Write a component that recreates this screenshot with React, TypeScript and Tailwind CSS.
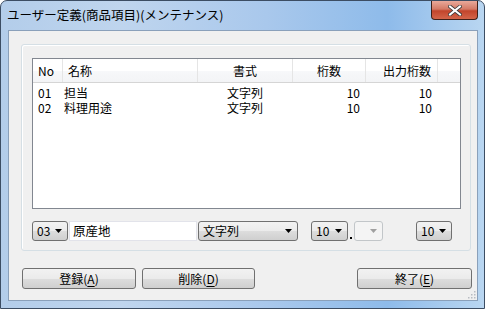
import React from "react";

const font = { fontFamily: '"Noto Sans CJK JP", "Noto Sans", sans-serif' };

function Arrow({ disabled = false }: { disabled?: boolean }) {
  return (
    <svg width="7" height="4" viewBox="0 0 7 4" className="shrink-0">
      <path d="M0 0 H7 L3.5 4 Z" fill={disabled ? "#a0a0a0" : "#000"} />
    </svg>
  );
}

function Combo({ w, text, disabled = false }: { w: string; text?: string; disabled?: boolean }) {
  return (
    <div
      className={`${w} h-[20px] flex items-center justify-between pl-[4px] pr-[5px] rounded-[3px] border ${
        disabled
          ? "border-[#c2c6c9] bg-[#f4f4f4]"
          : "border-[#707070] bg-[linear-gradient(#f2f2f2_0%,#ebebeb_50%,#dddddd_51%,#cfcfcf_100%)]"
      } text-[12px] leading-none text-black`}
    >
      <span>{text}</span>
      <Arrow disabled={disabled} />
    </div>
  );
}

function Button({ w, label, acc }: { w: string; label: string; acc: string }) {
  return (
    <div
      className={`${w} h-[21px] flex items-center justify-center rounded-[3px] border border-[#707070] bg-[linear-gradient(#f2f2f2_0%,#ebebeb_50%,#dddddd_51%,#cfcfcf_100%)] text-[12px] leading-none text-black`}
    >
      {label}(<span className="underline underline-offset-2">{acc}</span>)
    </div>
  );
}

export default function App() {
  const rows = [
    { no: "01", name: "担当", fmt: "文字列", d: "10", o: "10" },
    { no: "02", name: "料理用途", fmt: "文字列", d: "10", o: "10" },
  ];
  return (
    <div
      style={font}
      className="w-[485px] h-[309px] flex flex-col rounded-t-[7px] border border-[#3c4d63] bg-[linear-gradient(90deg,#b3cdea_0%,#bfd5ee_25%,#a9c8ec_55%,#8ebbea_80%,#b9d6f1_100%)] overflow-hidden"
    >
      {/* title bar */}
      <div className="h-[29px] flex items-start justify-between">
        <div className="pl-[6px] pt-[6px] text-[12.5px] leading-[16px] text-black">
          ユーザー定義(商品項目)(メンテナンス)
        </div>
        <div className="mr-[6px] w-[47px] h-[19px] rounded-b-[4px] border border-t-0 border-[#3e2019] bg-[linear-gradient(#e9a99a_0%,#d47a66_45%,#c2452c_55%,#d4654a_100%)] flex items-center justify-center">
          <svg width="14" height="11" viewBox="0 0 14 11">
            <path d="M2 1.5 L12 9.5 M12 1.5 L2 9.5" stroke="#3b3b3b" strokeWidth="3.6" strokeLinecap="square" />
            <path d="M2 1.5 L12 9.5 M12 1.5 L2 9.5" stroke="#ffffff" strokeWidth="2" strokeLinecap="square" />
          </svg>
        </div>
      </div>
      {/* client */}
      <div className="ml-[7px] w-[470px] h-[271px] border border-[#8aa0ba] bg-[#f0f0f0] relative">
        <div className="ml-[12px] mt-[13px] w-[450px] h-[207px] rounded-[3px] border border-[#d5dfe5] shadow-[inset_1px_1px_0_#ffffff] pl-[10px] pt-[13px]">
          {/* list */}
          <div className="w-[429px] h-[151px] border border-[#828790] bg-white text-[12px] text-black">
            <div className="h-[24px] flex items-stretch border-b border-[#d5d5d5] bg-[linear-gradient(#ffffff_0%,#ffffff_50%,#f7f8fa_51%,#f3f4f6_100%)]">
              <div className="w-[30px] flex items-center pl-[5px] border-r border-[#e5e5e5]">No</div>
              <div className="w-[135px] flex items-center pl-[5px] border-r border-[#e5e5e5]">名称</div>
              <div className="w-[95px] flex items-center justify-center border-r border-[#e5e5e5]">書式</div>
              <div className="w-[73px] flex items-center justify-center border-r border-[#e5e5e5]">桁数</div>
              <div className="w-[72px] flex items-center justify-end pr-[6px] border-r border-[#e5e5e5]">出力桁数</div>
              <div className="flex-1" />
            </div>
            <div className="pt-[2px]">
              {rows.map((r) => (
                <div key={r.no} className="h-[15px] flex items-center text-[12px] leading-[15px] overflow-hidden">
                  <div className="w-[30px] pl-[5px]">{r.no}</div>
                  <div className="w-[135px] pl-[1px]">{r.name}</div>
                  <div className="w-[95px] pl-[29px]">{r.fmt}</div>
                  <div className="w-[73px] text-right pr-[6px]">{r.d}</div>
                  <div className="w-[72px] text-right pr-[6px]">{r.o}</div>
                </div>
              ))}
            </div>
          </div>
          {/* controls */}
          <div className="mt-[12px] h-[20px] flex items-center">
            <Combo w="w-[36px]" text="03" />
            <div className="ml-[1px] w-[128px] h-[20px] flex items-center pl-[3px] bg-white border border-[#e2e3ea] text-[12.5px] leading-none">
              原産地
            </div>
            <div className="ml-[1px]">
              <Combo w="w-[100px]" text="文字列" />
            </div>
            <div className="ml-[13px]">
              <Combo w="w-[37px]" text="10" />
            </div>
            <div className="w-[6px] h-[20px] flex items-end justify-center pb-[2px]">
              <div className="w-[2px] h-[2px] bg-black" />
            </div>
            <Combo w="w-[29px]" disabled />
            <div className="ml-[33px]">
              <Combo w="w-[36px]" text="10" />
            </div>
          </div>
        </div>
        {/* buttons */}
        <div className="mt-[17px] ml-[13px] flex items-center">
          <Button w="w-[114px]" label="登録" acc="A" />
          <div className="ml-[6px]">
            <Button w="w-[113px]" label="削除" acc="D" />
          </div>
          <div className="ml-[102px]">
            <Button w="w-[115px]" label="終了" acc="E" />
          </div>
        </div>
        {/* resize grip */}
        <svg className="absolute right-[1px] bottom-[1px]" width="10" height="10" viewBox="0 0 10 10">
          {[
            [8, 2],
            [5, 5],
            [8, 5],
            [2, 8],
            [5, 8],
            [8, 8],
          ].map(([x, y], i) => (
            <rect key={i} x={x} y={y} width="1.5" height="1.5" fill="#b8bcc2" />
          ))}
        </svg>
      </div>
    </div>
  );
}
